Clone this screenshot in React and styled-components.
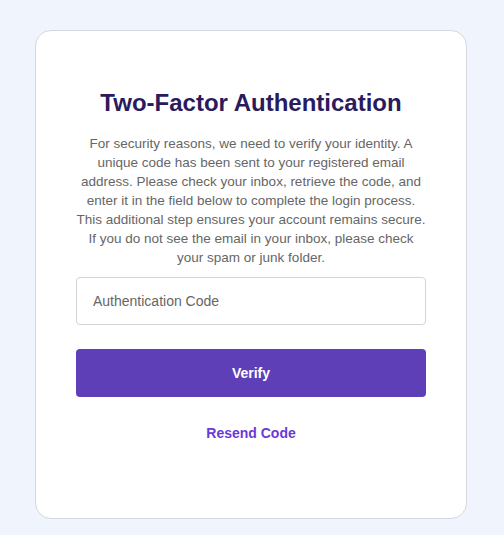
import React from "react";
import styled, { createGlobalStyle } from "styled-components";

const GlobalStyle = createGlobalStyle`
  html, body { margin: 0; padding: 0; background: #f0f4fd; }
  body { font-family: "Liberation Sans", Arial, sans-serif; }
`;

const Page = styled.div`
  display: flex;
  justify-content: flex-start;
  padding: 30px 0 0 35px;
`;

const Card = styled.div`
  width: 432px;
  box-sizing: border-box;
  background: #ffffff;
  border: 1px solid #d6d6e0;
  border-radius: 16px;
  padding: 58px 40px 77px;
  display: flex;
  flex-direction: column;
  align-items: stretch;
  text-align: center;
`;

const Title = styled.h1`
  margin: 0 0 17px;
  font-size: 24px;
  line-height: 28px;
  font-weight: 700;
  color: #2a1a5e;
`;

const Text = styled.p`
  margin: 0 0 10px;
  font-family: "Liberation Sans", Arial, sans-serif;
  font-size: 13.5px;
  line-height: 19px;
  color: #666666;
`;

const Input = styled.input`
  box-sizing: border-box;
  height: 48px;
  width: 100%;
  padding: 0 16px;
  border: 1px solid #d4d4d4;
  border-radius: 4px;
  font-family: inherit;
  font-size: 14px;
  color: #333;
  outline: none;
  &::placeholder { color: #666666; }
`;

const Button = styled.button`
  margin-top: 24px;
  height: 48px;
  border: none;
  border-radius: 4px;
  background: #5e3fb8;
  color: #ffffff;
  font-family: inherit;
  font-size: 14px;
  font-weight: 700;
  cursor: pointer;
`;

const Link = styled.a`
  margin-top: 28px;
  align-self: center;
  font-size: 14px;
  font-weight: 700;
  color: #6a3bd6;
  text-decoration: none;
  cursor: pointer;
`;

export default function App() {
  return (
    <>
      <GlobalStyle />
      <Page>
        <Card>
          <Title>Two-Factor Authentication</Title>
          <Text>
            For security reasons, we need to verify your identity. A unique code
            has been sent to your registered email address. Please check your
            inbox, retrieve the code, and enter it in the field below to complete
            the login process. This additional step ensures your account remains
            secure. If you do not see the email in your inbox, please check your
            spam or junk folder.
          </Text>
          <Input placeholder="Authentication Code" />
          <Button>Verify</Button>
          <Link>Resend Code</Link>
        </Card>
      </Page>
    </>
  );
}
